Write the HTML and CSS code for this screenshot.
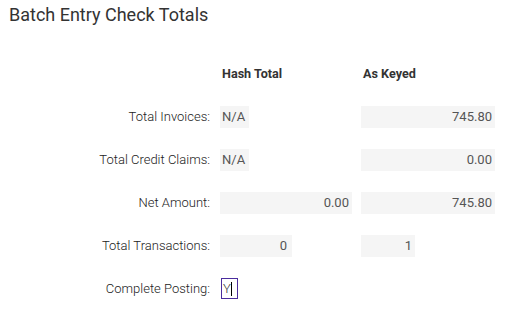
FILE: index.html
```html
<!DOCTYPE html>
<html lang="en">
<head>
    <meta charset="UTF-8">
    <meta name="viewport" content="width=device-width, initial-scale=1.0">
    <title>Batch Entry Check Totals</title>
    <link rel="stylesheet" href="styles.css">
</head>
<body>
    <h2 class="title">Batch Entry Check Totals</h2>

    <div class="totals">
        <div class="label"></div>
        <div class="head">Hash Total</div>
        <div class="head">As Keyed</div>

        <div class="label">Total Invoices:</div>
        <div class="cell"><span class="field na">N/A</span></div>
        <div class="cell"><span class="field wide">745.80</span></div>

        <div class="label">Total Credit Claims:</div>
        <div class="cell"><span class="field na">N/A</span></div>
        <div class="cell"><span class="field wide">0.00</span></div>

        <div class="label">Net Amount:</div>
        <div class="cell"><span class="field hash">0.00</span></div>
        <div class="cell"><span class="field wide">745.80</span></div>

        <div class="label">Total Transactions:</div>
        <div class="cell"><span class="field count">0</span></div>
        <div class="cell"><span class="field small">1</span></div>

        <div class="label">Complete Posting:</div>
        <div class="cell"><span class="flag">Y<span class="caret"></span></span></div>
        <div class="cell"></div>
    </div>
</body>
</html>
```

FILE: styles.css
```css
body {
    margin: 0;
    padding: 4px 9px 0 0;
    font-family: Roboto, "Liberation Sans", sans-serif;
    color: #333;
    background: #fff;
}
.title {
    margin: 0 0 26px 9px;
    font-size: 18px;
    font-weight: 400;
    line-height: 22px;
    color: #333;
}
.totals {
    display: grid;
    grid-template-columns: 220px 141px 134px;
    grid-auto-rows: 43px;
    font-size: 13px;
    font-weight: 300;
}
.label {
    display: flex;
    align-items: center;
    justify-content: flex-end;
    padding-right: 10px;
    color: #222;
}
.head {
    display: flex;
    align-items: center;
    padding-left: 2px;
    font-size: 12.6px;
    font-weight: 700;
    color: #333;
}
.cell {
    display: flex;
    align-items: center;
}
.field {
    height: 22px;
    line-height: 22px;
    background: #f5f5f5;
    color: #555;
    font-weight: 400;
    text-align: right;
    padding: 0 3px;
    box-sizing: border-box;
}
.na {
    text-align: left;
    padding: 0 4px 0 2px;
}
.wide {
    width: 134px;
}
.hash {
    width: 132px;
}
.count {
    width: 72px;
    padding-right: 5px;
}
.small {
    width: 54px;
}
.flag {
    display: flex;
    align-items: center;
    width: 17px;
    height: 21px;
    margin-left: 1px;
    border: 1px solid #4b2d9e;
    box-sizing: border-box;
    padding-left: 1px;
    font-size: 13px;
    color: #333;
}
.caret {
    width: 1px;
    height: 14px;
    background: #000;
}
```
